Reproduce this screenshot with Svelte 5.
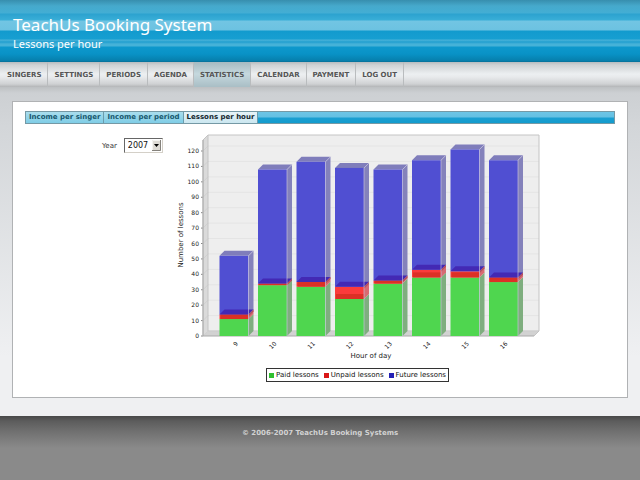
<script>
  const menu = ['SINGERS', 'SETTINGS', 'PERIODS', 'AGENDA', 'STATISTICS', 'CALENDAR', 'PAYMENT', 'LOG OUT'];
  const tabs = ['Income per singer', 'Income per period', 'Lessons per hour'];
  const hours = [
    { hour: 9, paid: 11, unpaid: 3, future: 38 },
    { hour: 10, paid: 33, unpaid: 1, future: 74 },
    { hour: 11, paid: 32, unpaid: 3, future: 78 },
    { hour: 12, paid: 24, unpaid: 8, future: 77 },
    { hour: 13, paid: 34, unpaid: 2, future: 72 },
    { hour: 14, paid: 38, unpaid: 5, future: 71 },
    { hour: 15, paid: 38, unpaid: 4, future: 79 },
    { hour: 16, paid: 35, unpaid: 3, future: 76 }
  ];
  const legend = [
    { name: 'Paid lessons', color: '#2fc02f' },
    { name: 'Unpaid lessons', color: '#d91616' },
    { name: 'Future lessons', color: '#2420b4' }
  ];
  const ticks = Array.from({ length: 13 }, (_, i) => i * 10);
  const scale = 185 / 120;
  const base = 204;
  const step = 38.5;
  const width = 29;
  const depth = 5;
  const y = (v) => base - v * scale;

  const bars = hours.map((d, i) => {
    const x = 44.5 + i * step;
    const y1 = y(d.paid);
    const y2 = y(d.paid + d.unpaid);
    const y3 = y(d.paid + d.unpaid + d.future);
    return { hour: d.hour, x, y1, y2, y3 };
  });
  const side = (x, top, bottom) =>
    `${x},${top} ${x + depth},${top - depth} ${x + depth},${bottom - depth} ${x},${bottom}`;
  const lid = (x, top) =>
    `${x},${top} ${x + depth},${top - depth} ${x + width + depth},${top - depth} ${x + width},${top}`;

  let year = $state('2007');
</script>

<div class="page">
  <header>
    <h1>TeachUs Booking System</h1>
    <h2>Lessons per hour</h2>
  </header>
  <nav class="menu">
    {#each menu as item}
      <a href="#{item.toLowerCase().replace(' ', '-')}" class:active={item === 'STATISTICS'}>{item}</a>
    {/each}
  </nav>
  <main>
    <section class="panel">
      <nav class="tabs">
        {#each tabs as tab, i}
          <a href="#tab-{i}" class:active={i === 2}>{tab}</a>
        {/each}
      </nav>
      <div class="report">
        <div class="filter">
          <label for="year">Year</label>
          <span class="pick">
            <select id="year" bind:value={year}>
              <option>2007</option>
              <option>2006</option>
            </select>
            <svg class="arrow" viewBox="0 0 9 11" aria-hidden="true">
              <rect width="9" height="11" fill="#dedbd5" />
              <path d="M0.5 10.5V0.5H8.5" fill="none" stroke="#f4f3f0" />
              <path d="M8.5 0V10.5H0" fill="none" stroke="#85827c" />
              <path d="M2 4h5L4.5 7z" fill="#000" />
            </svg>
          </span>
        </div>
        <div class="chart">
          <svg viewBox="0 0 365 232" role="img" aria-label="Lessons per hour of day">
            <rect x="33" y="3" width="331" height="196" fill="#eee" />
            <polygon points="28,8 33,3 33,199 28,204" fill="#dadada" />
            <polygon points="28,204 33,199 364,199 359,204" fill="#d2d2d2" />
            {#each ticks as t}
              <line x1="33" x2="364" y1={y(t) - depth} y2={y(t) - depth} stroke="#e4e4e4" />
              <line x1="28" x2="33" y1={y(t)} y2={y(t) - depth} stroke="#d0d0d0" />
              <line x1="26" x2="28" y1={y(t)} y2={y(t)} stroke="#888" />
              <text x="24" y={y(t) + 2} text-anchor="end" class="num">{t}</text>
            {/each}
            <path d="M28 204V8L33 3H364V199L359 204M33 3V199H364" fill="none" stroke="#c4c4c4" />
            <path d="M28 8V204H359" fill="none" stroke="#aaa" />
            {#each bars as b}
              <polygon points={side(b.x + width, b.y1, base)} fill="#7fae7f" />
              <polygon points={side(b.x + width, b.y2, b.y1)} fill="#d86a72" />
              <polygon points={side(b.x + width, b.y3, b.y2)} fill="#8482bb" />
              <polygon points={lid(b.x, b.y3)} fill="#7f7dbb" />
              <rect x={b.x} y={b.y1} {width} height={base - b.y1} fill="#4fd64f" />
              <rect x={b.x} y={b.y2} {width} height={b.y1 - b.y2} fill="#fb3b3b" />
              <rect x={b.x} y={b.y3} {width} height={b.y2 - b.y3} fill="#504fd2" />
              <rect x={b.x + 1} y={Math.max(b.y2, b.y1 - depth)} width={width - 1} height={Math.min(depth, b.y1 - b.y2)} fill="#dc3026" />
              <polygon points={lid(b.x, b.y2)} fill="#4329b4" />
              <polygon points={side(b.x + width, b.y2, b.y2 + 2)} fill="#b0505f" />
              <path d="M{b.x + width} {base}V{b.y3}L{b.x + width + depth} {b.y3 - depth}" fill="none" stroke="#c9c5de" stroke-opacity=".65" />
              <text class="num" text-anchor="end" transform="translate({b.x + 19} {base + 8}) rotate(-45)">{b.hour}</text>
            {/each}
            <text class="axis" text-anchor="middle" x="196" y="226">Hour of day</text>
            <text class="axis" text-anchor="middle" transform="translate(8 103) rotate(-90)">Number of lessons</text>
          </svg>
          <ul class="legend">
            {#each legend as l}
              <li><i style="background: {l.color}"></i>{l.name}</li>
            {/each}
          </ul>
        </div>
      </div>
    </section>
  </main>
  <footer>© 2006-2007 TeachUs Booking Systems</footer>
</div>

<style>
  :global(body) {
    margin: 0;
    background: #8a8a8a;
  }
  .page {
    display: flex;
    flex-direction: column;
    min-height: 100vh;
    font: 7px 'DejaVu Sans', Verdana, sans-serif;
    color: #333;
  }
  header {
    box-sizing: border-box;
    min-height: 62px;
    padding: 12px 13px 8px;
    color: #fff;
    font-family: 'Noto Sans', sans-serif;
    background: linear-gradient(#378eae 0, #46a9cc 6px, #43aed4 13px, #2ca2cf 14px, #39aed7 20px, #72c5e3 21px, #6cc2e1 30px, #129bce 31px, #179fd1 39px, #48b2d9 40px, #219fcf 42px, #45b2d8 44px, #45b2d8 46px, #0d98cc 47px, #0992c6 54px, #067eab 61px, #056b92 62px);
  }
  h1,
  h2 {
    margin: 0;
    font-weight: 400;
  }
  h1 {
    font-size: 17px;
    line-height: 25px;
  }
  h2 {
    font-size: 11px;
    line-height: 14px;
  }
  .menu {
    display: flex;
    height: 25px;
    padding-left: 1px;
    background: linear-gradient(#b7bcbf 0, #cfd2d4 3px, #eceff1 12px, #e8eaec 15px, #cfd1d3 22px, #b3b5b7 25px);
  }
  .menu a {
    padding: 0 6px;
    border-right: 1px solid #b9bcbe;
    font-weight: 700;
    line-height: 26px;
    color: #555;
    text-decoration: none;
  }
  .menu a.active {
    background: linear-gradient(#a5bac1, #c5d8de 12px, #a9bec5);
  }
  main {
    padding: 14px 12px 18px;
    background: linear-gradient(#bdc0c2 0, #cdd0d3 6px, #d3d6d9 40px, #eff0f2 270px);
  }
  .panel {
    border: 1px solid #b0b2b4;
    padding: 9px 12px 15px;
    background: #fff;
  }
  .tabs {
    display: flex;
    height: 11px;
    border: 1px solid #7599a5;
    background: linear-gradient(#6cc5e6 0, #65c0e2 5px, #1b9fd1 6px, #129bcd 11px);
  }
  .tabs a {
    padding: 0 3px;
    border-right: 1px solid #6c9cac;
    font-weight: 700;
    line-height: 11px;
    color: #17576d;
    text-decoration: none;
    background: linear-gradient(#a9dded, #7fcde6);
  }
  .tabs a.active {
    color: #14262d;
    background: linear-gradient(#e6f3f8, #cbe7f0);
  }
  .report {
    display: flex;
    align-items: flex-start;
    padding-top: 8px;
  }
  .filter {
    display: flex;
    align-items: center;
    gap: 7px;
    flex: 0 0 73px;
    padding: 6px 0 0 77px;
  }
  .pick {
    position: relative;
    display: flex;
  }
  select {
    appearance: none;
    box-sizing: border-box;
    width: 39px;
    height: 15px;
    padding: 0 0 0 3px;
    border: 1px solid #d4d0c8;
    border-top-color: #666;
    border-left-color: #666;
    border-radius: 0;
    font: 8px 'DejaVu Sans', Verdana, sans-serif;
    color: #111;
    background: #fff;
  }
  .arrow {
    position: absolute;
    top: 2px;
    right: 2px;
    width: 9px;
    height: 11px;
    pointer-events: none;
  }
  .chart {
    display: flex;
    flex-direction: column;
    align-items: center;
    gap: 4px;
    flex: 0 0 365px;
  }
  .chart > svg {
    display: block;
    width: 100%;
  }
  .num {
    font-size: 6px;
    fill: #222;
  }
  .axis {
    font-size: 7px;
    fill: #222;
  }
  .legend {
    display: flex;
    gap: 5px;
    margin: 0;
    padding: 0 2px;
    border: 1px solid #333;
    line-height: 12px;
    list-style: none;
    color: #111;
  }
  .legend li {
    display: flex;
    align-items: center;
    gap: 2px;
  }
  .legend i {
    width: 5px;
    height: 5px;
  }
  footer {
    flex: 1;
    padding-top: 12px;
    text-align: center;
    font-weight: 700;
    line-height: 10px;
    color: #d2d2d2;
    background: linear-gradient(#484848 0, #5c5c5c 5px, #717171 16px, #8a8a8a 32px);
  }
</style>
